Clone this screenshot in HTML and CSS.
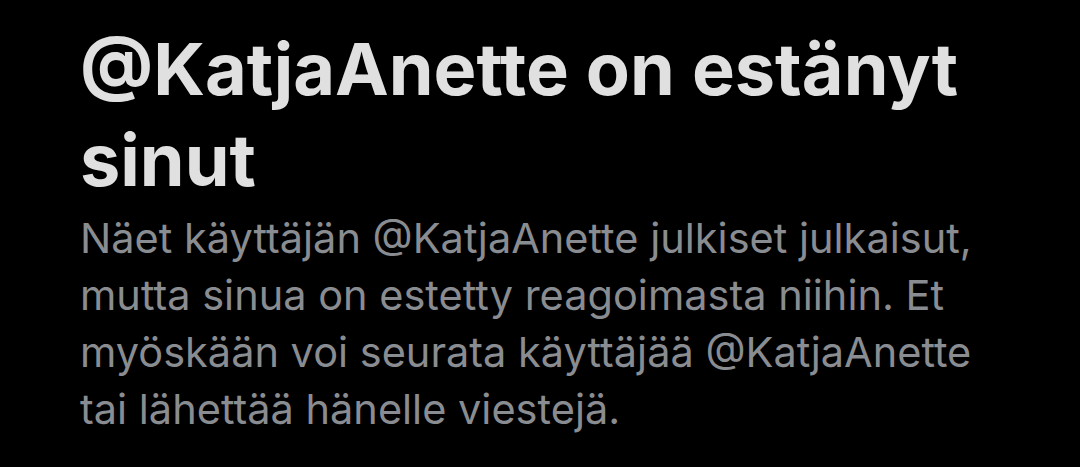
FILE: index.html
```html
<!DOCTYPE html>
<html lang="fi">
<head>
    <meta charset="UTF-8">
    <meta name="viewport" content="width=device-width, initial-scale=1.0">
    <title>Estetty</title>
    <link rel="stylesheet" href="styles.css">
</head>
<body>
    <main class="blocked">
        <h1 class="blocked-title">@KatjaAnette on estänyt sinut</h1>
        <p class="blocked-text">Näet käyttäjän @KatjaAnette julkiset julkaisut, mutta sinua on estetty reagoimasta niihin. Et myöskään voi seurata käyttäjää @KatjaAnette tai lähettää hänelle viestejä.</p>
    </main>
</body>
</html>
```

FILE: styles.css
```css
html, body {
    margin: 0;
    padding: 0;
    background: #000;
}
body {
    font-family: Inter, "Noto Sans", sans-serif;
    height: 467px;
    overflow: hidden;
}
.blocked {
    width: 930px;
    padding: 23px 0 0 80px;
}
.blocked-title {
    margin: 0;
    font-size: 72px;
    font-weight: 700;
    line-height: 91px;
    color: #e0e0e0;
}
.blocked-text {
    margin: 5px 0 0;
    font-size: 41.5px;
    line-height: 57px;
    color: #898c90;
}
```
